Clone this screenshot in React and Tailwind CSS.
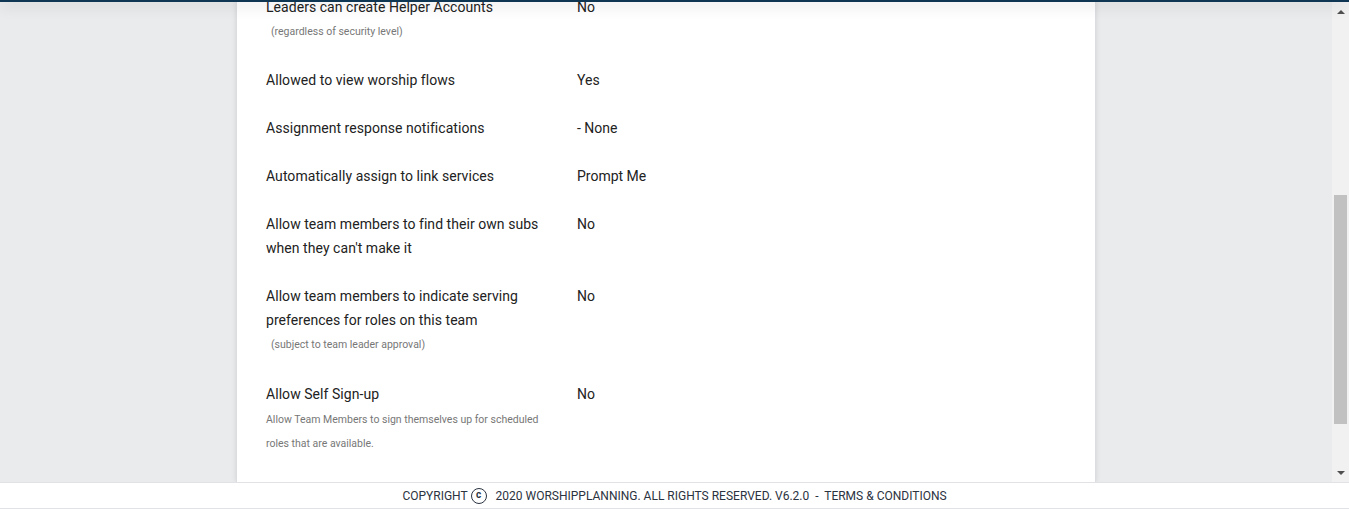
const rows = [
  { label: "Leaders can create Helper Accounts", value: "No", note: "(regardless of security level)", noteH: "leading-[25px]" },
  { label: "Allowed to view worship flows", value: "Yes" },
  { label: "Assignment response notifications", value: "- None" },
  { label: "Automatically assign to link services", value: "Prompt Me" },
  { label: "Allow team members to find their own subs when they can't make it", value: "No" },
  {
    label: "Allow team members to indicate serving preferences for roles on this team",
    value: "No",
    note: "(subject to team leader approval)",
    noteH: "leading-[26px]",
  },
  {
    label: "Allow Self Sign-up",
    value: "No",
    desc: "Allow Team Members to sign themselves up for scheduled roles that are available.",
  },
];

function Row({ row }) {
  return (
    <div className="flex pb-6">
      <div className="w-[311px] shrink-0 pr-5">
        <div className="text-[14px] tracking-[0.05px] leading-6 text-[#222]">{row.label}</div>
        {row.note && (
          <div className={`pl-[5px] text-[10.5px] text-[#777] ${row.noteH}`}>{row.note}</div>
        )}
        {row.desc && (
          <div className="pt-[2px] text-[10.5px] leading-6 text-[#777]">{row.desc}</div>
        )}
      </div>
      <div className="text-[14px] leading-6 text-[#222]">{row.value}</div>
    </div>
  );
}

function Scrollbar() {
  return (
    <div className="w-[17px] h-[482px] shrink-0 bg-[#f1f1f1] flex flex-col items-center">
      <div className="h-[14px] shrink-0 flex items-end">
        <div className="w-0 h-0 border-l-[4px] border-r-[4px] border-b-[4px] border-l-transparent border-r-transparent border-b-[#505050]" />
      </div>
      <div className="h-[181px] shrink-0" />
      <div className="w-[13px] h-[229px] shrink-0 bg-[#c1c1c1]" />
      <div className="flex-1 flex items-end pb-[7px]">
        <div className="w-0 h-0 border-l-[4px] border-r-[4px] border-t-[4px] border-l-transparent border-r-transparent border-t-[#505050]" />
      </div>
    </div>
  );
}

export default function App() {
  return (
    <div
      className="w-[1349px] h-[509px] flex flex-col overflow-hidden bg-[#eaebed] relative"
      style={{ fontFamily: "Roboto, 'Liberation Sans', sans-serif" }}
    >
      {/* fixed top bar */}
      <div className="absolute top-0 left-0 right-0 h-[2px] bg-[#0f3754] shadow-[0_3px_14px_rgba(0,0,0,0.3)] z-10" />

      <div className="flex h-[482px] shrink-0">
        <div className="flex-1 h-[482px] overflow-hidden">
          <div className="w-[860px] h-[482px] mx-auto overflow-hidden bg-white border-l border-r border-[#dcdde0] shadow-[0_0_5px_rgba(0,0,0,0.1)] px-[29px]">
            <div className="-mt-[5px]">
              {rows.map((r) => (
                <Row key={r.label} row={r} />
              ))}
            </div>
          </div>
        </div>
        <Scrollbar />
      </div>

      <footer className="h-[27px] shrink-0 bg-white border-t border-b border-[#e1e2e5] flex items-center justify-center text-[12px] text-[#2b3341]">
        <span>COPYRIGHT</span>
        <span className="ml-[3px] mr-[6px] inline-flex items-center justify-center w-[16px] h-[16px] rounded-full border-[1.5px] border-[#2b3341] text-[10px] font-bold leading-none pb-px">
          c
        </span>
        <span>&nbsp;2020 WORSHIPPLANNING. ALL RIGHTS RESERVED. V6.2.0&nbsp; -&nbsp; TERMS &amp; CONDITIONS</span>
      </footer>
    </div>
  );
}
